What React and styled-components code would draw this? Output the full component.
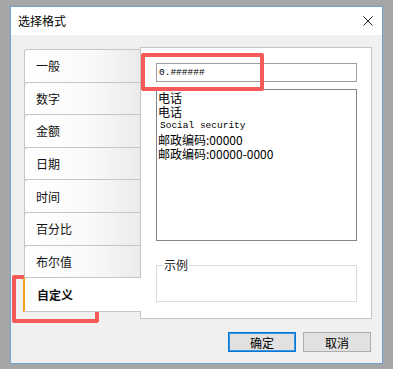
import React from "react";
import styled, { createGlobalStyle } from "styled-components";

const Global = createGlobalStyle`
  html, body { margin: 0; padding: 0; background: #a6a6a6; }
  body { font-family: "Noto Sans CJK SC", "Noto Sans", sans-serif; }
  * { box-sizing: border-box; }
`;

const Stage = styled.div`
  position: relative;
  width: 393px;
  height: 369px;
  padding: 6px 0 0 10px;
  background: #a6a6a6;
  overflow: hidden;
`;

const Window = styled.div`
  width: 373px;
  height: 358px;
  border: 1px solid #6ea2d9;
  background: #f0f0f0;
  display: flex;
  flex-direction: column;
`;

const TitleBar = styled.div`
  height: 28px;
  background: #ffffff;
  display: flex;
  align-items: center;
  justify-content: space-between;
  padding: 0 9px 0 7px;
`;

const Title = styled.span`
  font-size: 12px;
  line-height: 14px;
  color: #000;
`;

const Close = styled.span`
  display: flex;
  width: 10px;
  height: 10px;
`;

const Body = styled.div`
  flex: 1;
  padding: 12px 10px 0 13px;
  display: flex;
  flex-direction: column;
`;

const Main = styled.div`
  display: flex;
  align-items: flex-start;
`;

const TabList = styled.div`
  width: 116px;
  margin-top: 2px;
  display: flex;
  flex-direction: column;
  position: relative;
  z-index: 1;
`;

const Tab = styled.div`
  height: ${(p) => (p.$active ? "35px" : "33.6px")};
  margin-top: -1px;
  &:first-child { margin-top: 0; }
  display: flex;
  align-items: center;
  font-size: 12px;
  color: #111;
  font-weight: ${(p) => (p.$active ? 700 : 400)};
  border: 1px solid #c6c6c6;
  border-right: none;
  border-top-left-radius: 3px;
  ${(p) =>
    p.$active
      ? `
    width: 118px;
    margin-left: -1px;
    background: #ffffff;
    border-left: 2px solid #f3a21c;
    padding-left: 12px;
  `
      : `
    width: 116px;
    background: linear-gradient(to right, #ffffff 0%, #fafafa 55%, #ebebeb 100%);
    padding-left: 11px;
  `}
`;

const Panel = styled.div`
  width: 232px;
  height: 272px;
  border: 1px solid #c4c4c4;
  background: #ffffff;
  padding: 15px 14px 0 15px;
  display: flex;
  flex-direction: column;
`;

const FormatInput = styled.div`
  height: 19px;
  border: 1px solid #a0a0a0;
  padding-left: 2px;
  font-family: "Liberation Mono", monospace;
  font-size: 9.5px;
  line-height: 17px;
  color: #000;
`;

const ListBox = styled.div`
  margin-top: 7px;
  height: 152px;
  border: 1px solid #858585;
  padding: 1px 0 0 1px;
  display: flex;
  flex-direction: column;
`;

const ListItem = styled.div`
  height: 14px;
  line-height: 14px;
  font-size: 12px;
  color: #000;
  white-space: nowrap;
  font-family: ${(p) =>
    p.$mono ? `"Liberation Mono", monospace` : `"Noto Sans CJK SC", sans-serif`};
  ${(p) => (p.$mono ? "font-size: 9.5px; padding-left: 2px;" : "")}
`;

const GroupBox = styled.div`
  position: relative;
  margin-top: 24px;
  height: 37px;
  border: 1px solid #dcdcdc;
`;

const Legend = styled.span`
  position: absolute;
  top: -8px;
  left: 6px;
  padding: 0 1px;
  background: #ffffff;
  font-size: 12px;
  line-height: 14px;
  color: #222;
`;

const ButtonRow = styled.div`
  margin-top: 13px;
  padding-right: 1px;
  display: flex;
  justify-content: flex-end;
  gap: 7px;
`;

const Button = styled.div`
  width: 68px;
  height: 20px;
  display: flex;
  align-items: center;
  justify-content: center;
  font-size: 12px;
  color: #000;
  background: #e1e1e1;
  border: 1px solid ${(p) => (p.$default ? "#0078d7" : "#adadad")};
  ${(p) => (p.$default ? "box-shadow: inset 0 0 0 1px #3b94dd;" : "")}
`;

const Highlight = styled.div`
  position: absolute;
  left: ${(p) => p.$x}px;
  top: ${(p) => p.$y}px;
  width: ${(p) => p.$w}px;
  height: ${(p) => p.$h}px;
  border: 4px solid #f55a5a;
  border-radius: 2px;
  pointer-events: none;
`;

const tabs = ["一般", "数字", "金额", "日期", "时间", "百分比", "布尔值", "自定义"];

export default function App() {
  return (
    <>
      <Global />
      <Stage>
        <Window>
          <TitleBar>
            <Title>选择格式</Title>
            <Close>
              <svg width="10" height="10" viewBox="0 0 10 10">
                <path d="M0.5 0.5 L9.5 9.5 M9.5 0.5 L0.5 9.5" stroke="#222" strokeWidth="1" fill="none" />
              </svg>
            </Close>
          </TitleBar>
          <Body>
            <Main>
              <TabList>
                {tabs.map((t) => (
                  <Tab key={t} $active={t === "自定义"}>
                    {t}
                  </Tab>
                ))}
              </TabList>
              <Panel>
                <FormatInput>0.######</FormatInput>
                <ListBox>
                  <ListItem>电话</ListItem>
                  <ListItem>电话</ListItem>
                  <ListItem $mono>Social security</ListItem>
                  <ListItem>邮政编码:00000</ListItem>
                  <ListItem>邮政编码:00000-0000</ListItem>
                </ListBox>
                <GroupBox>
                  <Legend>示例</Legend>
                </GroupBox>
              </Panel>
            </Main>
            <ButtonRow>
              <Button $default>确定</Button>
              <Button>取消</Button>
            </ButtonRow>
          </Body>
        </Window>
        <Highlight $x={141} $y={53} $w={123} $h={38} />
        <Highlight $x={12} $y={275} $w={87} $h={48} />
      </Stage>
    </>
  );
}
